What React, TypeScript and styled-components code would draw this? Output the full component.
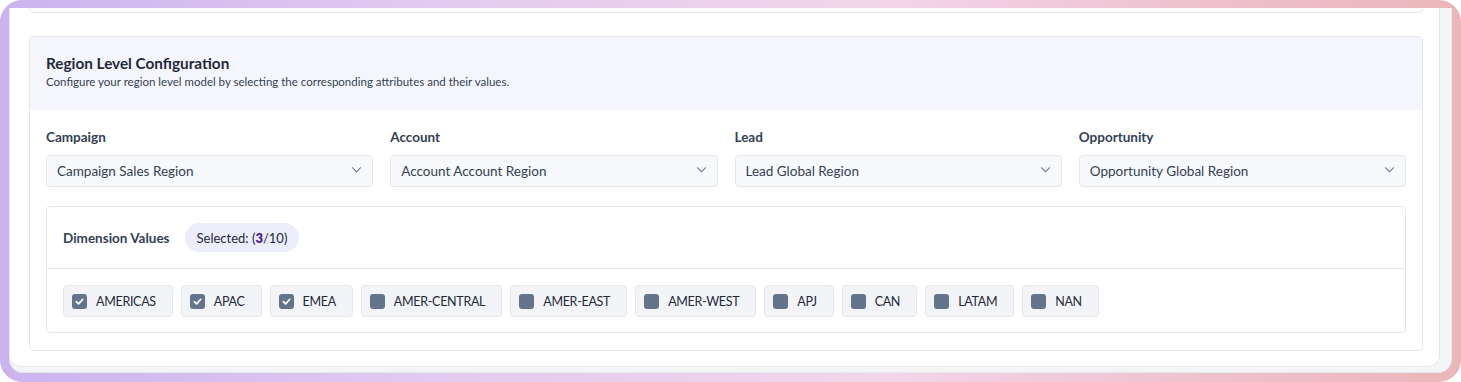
import React from 'react';
import styled, { createGlobalStyle } from 'styled-components';

const GlobalStyle = createGlobalStyle`
  html, body {
    margin: 0;
    padding: 0;
    background: #ffffff;
  }
  body {
    font-family: Lato, "Noto Sans", "Liberation Sans", sans-serif;
    -webkit-font-smoothing: antialiased;
  }
`;

const Frame = styled.div`
  width: 1461px;
  height: 382px;
  box-sizing: border-box;
  padding: 8px 9px 9px 9px;
  border-radius: 22px;
  background: linear-gradient(90deg, #cbb3ef 0%, #e2cbf0 30%, #f3d5ea 60%, #eebfca 85%, #eab6b9 100%);
`;

const Inner = styled.div`
  height: 100%;
  box-sizing: border-box;
  display: flex;
  background: #f4f5f7;
  border: 1px solid #e5e7eb;
  border-top: none;
  border-radius: 0 0 14px 14px;
  overflow: hidden;
`;

const Scroll = styled.div`
  flex: 1;
  display: flex;
  flex-direction: column;
  background: #ffffff;
  padding: 0 16px 0 19px;
  margin-bottom: 5px;
  border-right: 1px solid #e5e7eb;
  border-bottom: 1px solid #e5e7eb;
  border-radius: 0 0 12px 12px;
  overflow: hidden;
`;

const ScrollTrack = styled.div`
  width: 11px;
  flex-shrink: 0;
`;

const PrevCardEdge = styled.div`
  height: 4px;
  border: 1px solid #e5e7eb;
  border-top: none;
  border-radius: 0 0 5px 5px;
  margin-bottom: 23px;
`;

const Card = styled.section`
  border: 1px solid #e5e7eb;
  border-radius: 4px;
  overflow: hidden;
`;

const CardHeader = styled.div`
  background: #f5f6fd;
  padding: 15px 16px 20px;
`;

const Title = styled.h2`
  margin: 0;
  font-size: 15.3px;
  line-height: 22px;
  font-weight: 700;
  color: #1e293b;
`;

const Subtitle = styled.p`
  margin: 0;
  font-size: 11.5px;
  line-height: 16px;
  color: #334155;
`;

const CardBody = styled.div`
  padding: 18px 16px 17px;
`;

const FieldGrid = styled.div`
  display: grid;
  grid-template-columns: repeat(4, 1fr);
  column-gap: 17px;
`;

const Field = styled.div`
  display: flex;
  flex-direction: column;
  gap: 9px;
`;

const Label = styled.label`
  font-size: 13.5px;
  line-height: 18px;
  font-weight: 700;
  color: #334155;
`;

const Select = styled.div`
  height: 32px;
  box-sizing: border-box;
  display: flex;
  align-items: center;
  justify-content: space-between;
  padding: 0 10px 0 10px;
  background: #f8f9fc;
  border: 1px solid #e5e7eb;
  border-radius: 4px;
  font-size: 13.5px;
  color: #334155;
`;

const Chevron = styled.svg`
  width: 11px;
  height: 11px;
  margin-top: -4px;
  color: #64748b;
`;

const DimBox = styled.div`
  margin-top: 19px;
  border: 1px solid #e5e7eb;
  border-radius: 4px;
`;

const DimHeader = styled.div`
  display: flex;
  align-items: center;
  gap: 15px;
  padding: 16px 16px;
  border-bottom: 1px solid #e5e7eb;
`;

const DimTitle = styled.span`
  font-size: 13.5px;
  font-weight: 700;
  color: #334155;
`;

const Pill = styled.span`
  height: 29px;
  box-sizing: border-box;
  display: inline-flex;
  align-items: center;
  padding: 0 12px;
  border-radius: 15px;
  background: #ecedfb;
  font-size: 13px;
  color: #1e293b;
`;

const Count = styled.strong`
  color: #4c1d95;
  font-weight: 800;
`;

const ChipRow = styled.div`
  display: flex;
  flex-wrap: wrap;
  gap: 8px;
  padding: 16px 16px 15px;
`;

const Chip = styled.div`
  height: 32px;
  box-sizing: border-box;
  display: inline-flex;
  align-items: center;
  gap: 9px;
  padding: 0 16px 0 8px;
  background: #f3f4f7;
  border: 1px solid #e5e7eb;
  border-radius: 4px;
  font-size: 12.5px;
  letter-spacing: -0.3px;
  color: #1e293b;
`;

const Box = styled.span`
  width: 15px;
  height: 15px;
  border-radius: 3px;
  background: #64748b;
  display: inline-flex;
  align-items: center;
  justify-content: center;
`;

const fields = [
  { label: 'Campaign', value: 'Campaign Sales Region' },
  { label: 'Account', value: 'Account Account Region' },
  { label: 'Lead', value: 'Lead Global Region' },
  { label: 'Opportunity', value: 'Opportunity Global Region' },
];

const values = [
  { name: 'AMERICAS', checked: true },
  { name: 'APAC', checked: true },
  { name: 'EMEA', checked: true },
  { name: 'AMER-CENTRAL', checked: false },
  { name: 'AMER-EAST', checked: false },
  { name: 'AMER-WEST', checked: false },
  { name: 'APJ', checked: false },
  { name: 'CAN', checked: false },
  { name: 'LATAM', checked: false },
  { name: 'NAN', checked: false },
];

const App: React.FC = () => {
  const selected = values.filter(v => v.checked).length;

  return (
    <>
      <GlobalStyle />
      <Frame>
        <Inner>
          <Scroll>
            <PrevCardEdge />
            <Card>
              <CardHeader>
                <Title>Region Level Configuration</Title>
                <Subtitle>
                  Configure your region level model by selecting the corresponding attributes and their values.
                </Subtitle>
              </CardHeader>
              <CardBody>
                <FieldGrid>
                  {fields.map(f => (
                    <Field key={f.label}>
                      <Label>{f.label}</Label>
                      <Select>
                        <span>{f.value}</span>
                        <Chevron viewBox="0 0 12 12" fill="none">
                          <path d="M1.5 4 L6 8.5 L10.5 4" stroke="currentColor" strokeWidth="1.1" strokeLinecap="round" strokeLinejoin="round" />
                        </Chevron>
                      </Select>
                    </Field>
                  ))}
                </FieldGrid>

                <DimBox>
                  <DimHeader>
                    <DimTitle>Dimension Values</DimTitle>
                    <Pill>
                      Selected: (<Count>{selected}</Count>/{values.length})
                    </Pill>
                  </DimHeader>
                  <ChipRow>
                    {values.map(v => (
                      <Chip key={v.name}>
                        <Box>
                          {v.checked && (
                            <svg width="11" height="11" viewBox="0 0 12 12" fill="none">
                              <path d="M2.5 6.2 L5 8.6 L9.6 3.6" stroke="#ffffff" strokeWidth="1.8" strokeLinecap="round" strokeLinejoin="round" />
                            </svg>
                          )}
                        </Box>
                        {v.name}
                      </Chip>
                    ))}
                  </ChipRow>
                </DimBox>
              </CardBody>
            </Card>
          </Scroll>
          <ScrollTrack />
        </Inner>
      </Frame>
    </>
  );
};

export default App;
